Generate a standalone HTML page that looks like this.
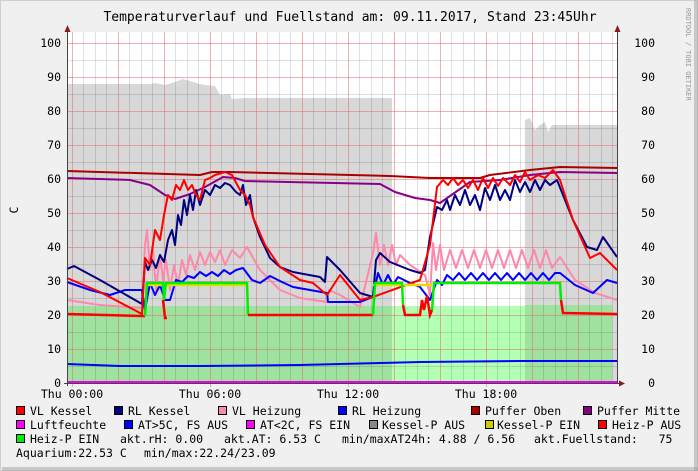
<!DOCTYPE html>
<html><head><meta charset="utf-8"><style>
body{margin:0;width:698px;height:471px;overflow:hidden;background:#f0f0f0;}
svg{display:block}
text{font-family:"DejaVu Sans Mono","Liberation Mono",monospace;font-size:11.5px;fill:#000}
</style></head><body>
<svg width="698" height="471" viewBox="0 0 698 471" xmlns="http://www.w3.org/2000/svg">
<rect x="0" y="0" width="698" height="471" fill="#f0f0f0"/>
<rect x="0.5" y="0.5" width="697" height="470" fill="none" stroke="#cfcfcf"/>
<rect x="2" y="467" width="696" height="4" fill="#a0a0a0" opacity="0.5"/>
<rect x="694" y="0" width="4" height="471" fill="#a0a0a0" opacity="0.5"/>
<text x="350" y="21" text-anchor="middle" style="font-size:13px">Temperaturverlauf und Fuellstand am: 09.11.2017, Stand 23:45Uhr</text>
<text transform="translate(686,8) rotate(90)" style="font-size:7px;fill:#999">RRDTOOL / TOBI OETIKER</text>
<text transform="translate(18,210) rotate(-90)" text-anchor="middle">C</text>
<!-- plot bg -->
<rect x="67" y="32" width="550" height="351" fill="#fff"/>
<!-- gray area -->
<polygon fill="#d8d8d8" points="67,383 67,84 150,84 155,83 165,85 175,82 183,79 190,81 200,84 205,85 215,86 220,95 230,94 232,99 245,98 300,98 392,98 392,383"/>
<polygon fill="#d8d8d8" points="525,383 525,120 530,118 535,130 540,125 545,122 548,132 552,125 617,125 617,383"/>
<!-- green -->
<rect x="392" y="306" width="133" height="77" fill="#b3ffb3"/>
<polygon fill="#9fe29f" points="67,383 67,306 392,306 392,383"/>
<polygon fill="#9fe29f" points="525,383 525,305 612,305 612,383"/>
<!-- grid -->
<g stroke="#000" stroke-opacity="0.12" stroke-width="1">
<path d="M67,366.5H617M67,332.5H617M67,298.5H617M67,264.5H617M67,230.5H617M67,196.5H617M67,162.5H617M67,128.5H617M67,94.5H617M67,60.5H617"/>
<path d="M83.5,32V383M95.5,32V383M106.5,32V383M129.5,32V383M141.5,32V383M152.5,32V383M175.5,32V383M187.5,32V383M198.5,32V383M221.5,32V383M233.5,32V383M244.5,32V383M267.5,32V383M279.5,32V383M290.5,32V383M313.5,32V383M325.5,32V383M336.5,32V383M359.5,32V383M371.5,32V383M382.5,32V383M405.5,32V383M417.5,32V383M428.5,32V383M451.5,32V383M463.5,32V383M474.5,32V383M497.5,32V383M509.5,32V383M520.5,32V383M543.5,32V383M555.5,32V383M566.5,32V383M589.5,32V383M601.5,32V383M612.5,32V383"/>
</g>
<g stroke="#e07070" stroke-opacity="0.55" stroke-width="1">
<path d="M67,349.5H617M67,315.5H617M67,281.5H617M67,247.5H617M67,213.5H617M67,179.5H617M67,145.5H617M67,111.5H617M67,77.5H617M67,43.5H617"/>
<path d="M72.5,32V387M118.5,32V383M164.5,32V383M210.5,32V387M256.5,32V383M302.5,32V383M348.5,32V387M394.5,32V383M440.5,32V383M486.5,32V387M532.5,32V383M578.5,32V383"/>
</g>
<g fill="none" stroke-width="2" stroke-linejoin="round">
<!-- AT blue -->
<polyline stroke="#0000ff" points="67,364 120,366 200,366 300,365 380,363 420,362 520,361 617,361"/>
<!-- Puffer Oben -->
<polyline stroke="#aa0000" points="67,171 200,175 212,172 230,172 390,176 430,178 480,178 490,175 530,170 560,167 617,168"/>
<!-- Puffer Mitte -->
<polyline stroke="#880088" points="67,178 130,180 150,185 165,195 175,199 190,194 205,187 223,177 235,178 245,181 380,184 395,192 415,198 430,200 440,203 450,196 470,182 500,180 530,175 560,172 617,173"/>
<!-- VL Heizung pink -->
<polyline stroke="#ff88aa" points="67,300 100,305 142,308 145,245 147,230 150,270 153,250 156,290 160,255 163,280 166,260 170,290 174,265 178,285 182,260 186,275 190,255 195,270 200,252 205,265 210,252 215,262 220,250 225,265 232,250 240,258 247,247 260,270 280,290 300,298 327,302 329,290 340,295 360,307 373,253 376,233 380,265 384,245 388,265 392,245 396,265 400,255 410,265 425,275 430,295 433,243 436,270 440,245 444,270 450,250 456,268 462,250 468,268 474,250 480,268 486,250 492,268 498,250 504,268 510,250 516,268 522,250 528,268 534,250 540,268 546,250 552,268 560,257 575,280 595,293 617,300"/>
<!-- RL Heizung blue -->
<polyline stroke="#0000ff" points="67,282 90,290 110,295 125,290 142,290 145,310 150,283 155,295 160,285 165,300 170,300 176,280 182,282 188,276 194,278 200,272 206,276 212,272 218,276 224,270 230,274 236,270 243,268 252,280 260,283 270,276 282,282 293,287 310,290 327,293 328,302 345,302 360,302 373,297 378,273 383,285 388,275 393,285 398,277 410,283 420,287 430,300 437,280 442,285 447,275 453,280 459,273 465,280 471,273 477,280 483,273 489,280 495,273 501,280 507,273 513,280 519,273 525,280 531,273 537,280 543,273 549,280 555,273 560,273 575,285 593,293 607,280 617,283"/>
<!-- RL Kessel navy -->
<polyline stroke="#000080" points="67,269 74,266 100,280 142,304 145,262 148,270 152,260 156,268 160,255 164,262 168,240 172,230 175,245 178,215 181,225 184,200 187,215 190,195 193,210 196,190 200,205 205,190 210,195 215,185 220,188 225,183 230,185 236,192 240,195 243,185 246,205 250,195 253,217 260,237 270,258 280,267 293,272 320,277 325,282 327,257 340,270 360,293 373,297 376,260 380,253 390,262 410,270 420,273 425,270 430,237 437,207 442,210 447,200 450,210 455,195 460,205 465,190 470,205 475,195 480,210 485,188 490,200 495,185 500,200 505,190 510,200 515,180 520,192 525,182 530,192 535,180 540,190 545,180 550,185 557,180 573,220 587,247 597,250 603,237 617,257"/>
<!-- VL Kessel red -->
<polyline stroke="#ff0000" points="67,278 100,292 142,314 145,258 150,265 155,230 160,240 164,215 168,195 172,200 176,185 180,190 184,180 188,190 192,185 196,195 200,200 205,180 210,178 215,175 225,172 232,175 240,190 245,195 250,205 253,217 265,245 280,267 300,280 313,283 327,295 340,275 360,300 373,297 420,280 430,245 437,187 443,180 448,185 453,178 458,185 463,180 468,188 473,180 478,190 483,178 488,188 493,178 498,186 503,178 510,185 515,175 520,182 525,172 530,180 538,175 545,178 553,170 560,180 573,220 590,258 600,253 617,270"/>
</g>
<!-- Heiz-P step -->
<g fill="none" stroke-width="2.5">
<polyline stroke="#ff0000" points="67,314 142,316 145,316"/>
<polyline stroke="#dddd00" points="145,285 247,285"/>
<polyline stroke="#00ee00" points="145,316 147,283 163,283 164,300 166,283 247,283 248,315"/>
<polyline stroke="#ff0000" points="163,300 165,318 167,318"/>
<polyline stroke="#ff0000" points="248,315 373,315"/>
<polyline stroke="#dddd00" points="373,285 432,285"/>
<polyline stroke="#00ee00" points="373,315 375,283 402,283 403,305"/>
<polyline stroke="#ff0000" points="403,305 405,315 420,315 422,300 424,310 427,296 430,315 432,310"/>
<polyline stroke="#00ee00" points="432,310 434,283 560,283 561,300"/>
<polyline stroke="#ff0000" points="561,300 563,313 617,314"/>
</g>
<!-- Luftfeuchte -->
<rect x="67" y="381" width="550" height="2.5" fill="#ee00ee"/>
<!-- axes -->
<path d="M67.5,28V386M617.5,28V383M64,383.5H620" stroke="#444" stroke-width="1"/>
<polygon points="64.5,32 67.5,25 70.5,32" fill="#8b1a1a"/>
<polygon points="614.5,32 617.5,25 620.5,32" fill="#8b1a1a"/>
<polygon points="619,380.5 625,383.5 619,386.5" fill="#8b1a1a"/>
<g text-anchor="end">
<text x="61" y="47">100</text><text x="61" y="81">90</text><text x="61" y="115">80</text><text x="61" y="149">70</text><text x="61" y="183">60</text><text x="61" y="217">50</text><text x="61" y="251">40</text><text x="61" y="285">30</text><text x="61" y="319">20</text><text x="61" y="353">10</text><text x="61" y="387">0</text>
<text x="655" y="47">100</text><text x="655" y="81">90</text><text x="655" y="115">80</text><text x="655" y="149">70</text><text x="655" y="183">60</text><text x="655" y="217">50</text><text x="655" y="251">40</text><text x="655" y="285">30</text><text x="655" y="319">20</text><text x="655" y="353">10</text><text x="655" y="387">0</text>
</g>
<g text-anchor="middle">
<text x="72" y="398">Thu 00:00</text><text x="210" y="398">Thu 06:00</text><text x="348" y="398">Thu 12:00</text><text x="486" y="398">Thu 18:00</text>
</g>
<!-- legend -->
<g stroke="#000" stroke-width="1">
<rect x="16.5" y="406.5" width="8" height="8" fill="#ff0000"/>
<rect x="114.5" y="406.5" width="8" height="8" fill="#000080"/>
<rect x="218.5" y="406.5" width="8" height="8" fill="#ff88aa"/>
<rect x="338.5" y="406.5" width="8" height="8" fill="#0000ff"/>
<rect x="471.5" y="406.5" width="8" height="8" fill="#aa0000"/>
<rect x="583.5" y="406.5" width="8" height="8" fill="#880088"/>
<rect x="16.5" y="420.5" width="8" height="8" fill="#ff00ff"/>
<rect x="124.5" y="420.5" width="8" height="8" fill="#0000ff"/>
<rect x="246.5" y="420.5" width="8" height="8" fill="#ff00ff"/>
<rect x="369.5" y="420.5" width="8" height="8" fill="#888888"/>
<rect x="485.5" y="420.5" width="8" height="8" fill="#cccc00"/>
<rect x="598.5" y="420.5" width="8" height="8" fill="#ff0000"/>
<rect x="16.5" y="434.5" width="8" height="8" fill="#00ee00"/>
</g>
<text x="30" y="415">VL Kessel</text>
<text x="128" y="415">RL Kessel</text>
<text x="232" y="415">VL Heizung</text>
<text x="352" y="415">RL Heizung</text>
<text x="485" y="415">Puffer Oben</text>
<text x="597" y="415">Puffer Mitte</text>
<text x="30" y="429">Luftfeuchte</text>
<text x="138" y="429">AT&gt;5C, FS AUS</text>
<text x="260" y="429">AT&lt;2C, FS EIN</text>
<text x="382" y="429">Kessel-P AUS</text>
<text x="497" y="429">Kessel-P EIN</text>
<text x="612" y="429">Heiz-P AUS</text>
<text x="30" y="443">Heiz-P EIN</text>
<text x="120" y="443">akt.rH: 0.00</text>
<text x="224" y="443">akt.AT: 6.53 C</text>
<text x="342" y="443">min/maxAT24h: 4.88 / 6.56</text>
<text x="534" y="443" xml:space="preserve">akt.Fuellstand:   75</text>
<text x="16" y="457">Aquarium:22.53 C</text>
<text x="144" y="457">min/max:22.24/23.09</text>
</svg>
</body></html>
